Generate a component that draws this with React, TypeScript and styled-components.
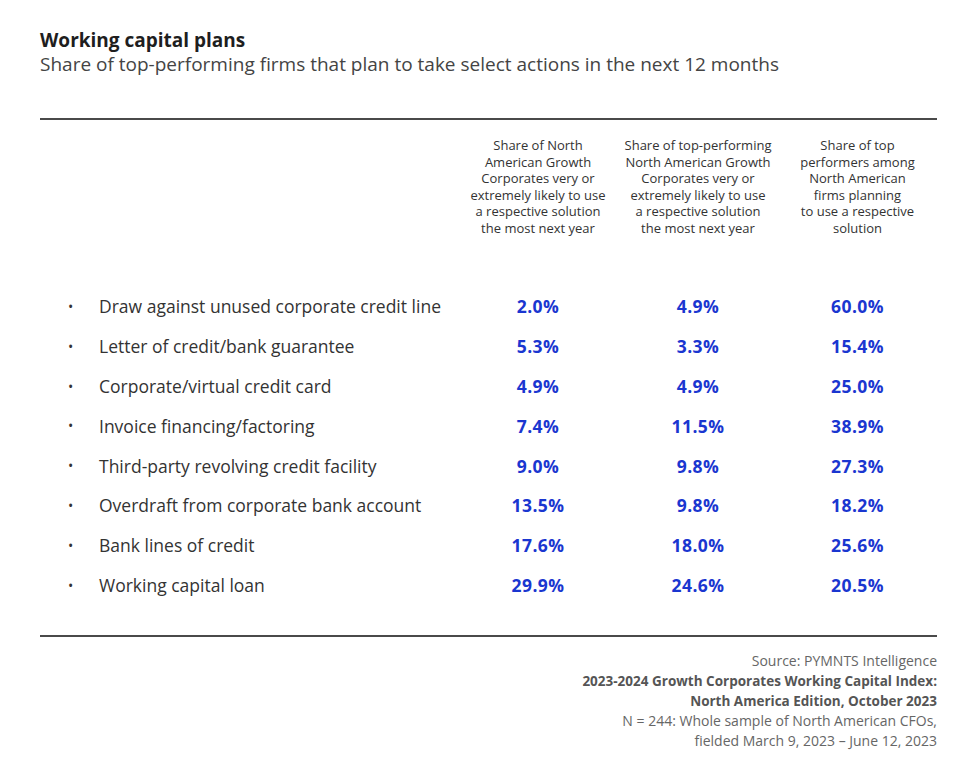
import React from "react";
import styled, { createGlobalStyle } from "styled-components";

const Global = createGlobalStyle`
  html, body { margin: 0; padding: 0; background: #fff; }
  body { font-family: "Open Sans", "Liberation Sans", sans-serif; }
`;

const Page = styled.div`
  width: 897px;
  padding: 28px 0 0 40px;
`;

const Title = styled.h1`
  margin: 0;
  font-size: 19px;
  line-height: 24px;
  font-weight: 700;
  color: #1e1e1e;
`;

const Subtitle = styled.p`
  margin: 0;
  font-size: 19px;
  line-height: 24px;
  font-weight: 400;
  color: #444;
`;

const Rule = styled.div<{ $top: number }>`
  height: 2px;
  background: #4a4a4a;
  margin-top: ${(p) => p.$top}px;
`;

const Grid = styled.div`
  display: grid;
  grid-template-columns: 418px 160px 160px 159px;
`;

const HeadCell = styled.div`
  grid-row: 1;
  padding-top: 17px;
  padding-bottom: 50px;
  font-size: 13px;
  line-height: 16.6px;
  color: #333;
  text-align: center;
`;

const Label = styled.div`
  display: flex;
  align-items: center;
  height: 39.8px;
  font-size: 17.5px;
  color: #333;
  white-space: nowrap;
`;

const Bullet = styled.span`
  width: 59px;
  padding-left: 28px;
  box-sizing: border-box;
  font-size: 14px;
`;

const Value = styled.div`
  display: flex;
  align-items: center;
  justify-content: center;
  height: 39.8px;
  font-size: 17.5px;
  font-weight: 700;
  letter-spacing: 0.4px;
  color: #1a36d0;
`;

const Footer = styled.div`
  margin-top: 14px;
  text-align: right;
  font-size: 14px;
  line-height: 20px;
  color: #666;
`;

const Strong = styled.div`
  font-weight: 700;
  font-size: 13.5px;
  color: #555;
`;

const headers = [
  ["Share of North", "American Growth", "Corporates very or", "extremely likely to use", "a respective solution", "the most next year"],
  ["Share of top-performing", "North American Growth", "Corporates very or", "extremely likely to use", "a respective solution", "the most next year"],
  ["Share of top", "performers among", "North American", "firms planning", "to use a respective", "solution"],
];

const rows: [string, string, string, string][] = [
  ["Draw against unused corporate credit line", "2.0%", "4.9%", "60.0%"],
  ["Letter of credit/bank guarantee", "5.3%", "3.3%", "15.4%"],
  ["Corporate/virtual credit card", "4.9%", "4.9%", "25.0%"],
  ["Invoice financing/factoring", "7.4%", "11.5%", "38.9%"],
  ["Third-party revolving credit facility", "9.0%", "9.8%", "27.3%"],
  ["Overdraft from corporate bank account", "13.5%", "9.8%", "18.2%"],
  ["Bank lines of credit", "17.6%", "18.0%", "25.6%"],
  ["Working capital loan", "29.9%", "24.6%", "20.5%"],
];

export default function App() {
  return (
    <Page>
      <Global />
      <Title>Working capital plans</Title>
      <Subtitle>Share of top-performing firms that plan to take select actions in the next 12 months</Subtitle>
      <Rule $top={42} />
      <Grid>
        <HeadCell />
        {headers.map((h, i) => (
          <HeadCell key={i}>
            {h.map((l, j) => (
              <div key={j}>{l}</div>
            ))}
          </HeadCell>
        ))}
        {rows.map((r) => (
          <React.Fragment key={r[0]}>
            <Label>
              <Bullet>•</Bullet>
              {r[0]}
            </Label>
            <Value>{r[1]}</Value>
            <Value>{r[2]}</Value>
            <Value>{r[3]}</Value>
          </React.Fragment>
        ))}
      </Grid>
      <Rule $top={30} />
      <Footer>
        <div>Source: PYMNTS Intelligence</div>
        <Strong>2023-2024 Growth Corporates Working Capital Index:</Strong>
        <Strong>North America Edition, October 2023</Strong>
        <div>N = 244: Whole sample of North American CFOs,</div>
        <div>fielded March 9, 2023 – June 12, 2023</div>
      </Footer>
    </Page>
  );
}
